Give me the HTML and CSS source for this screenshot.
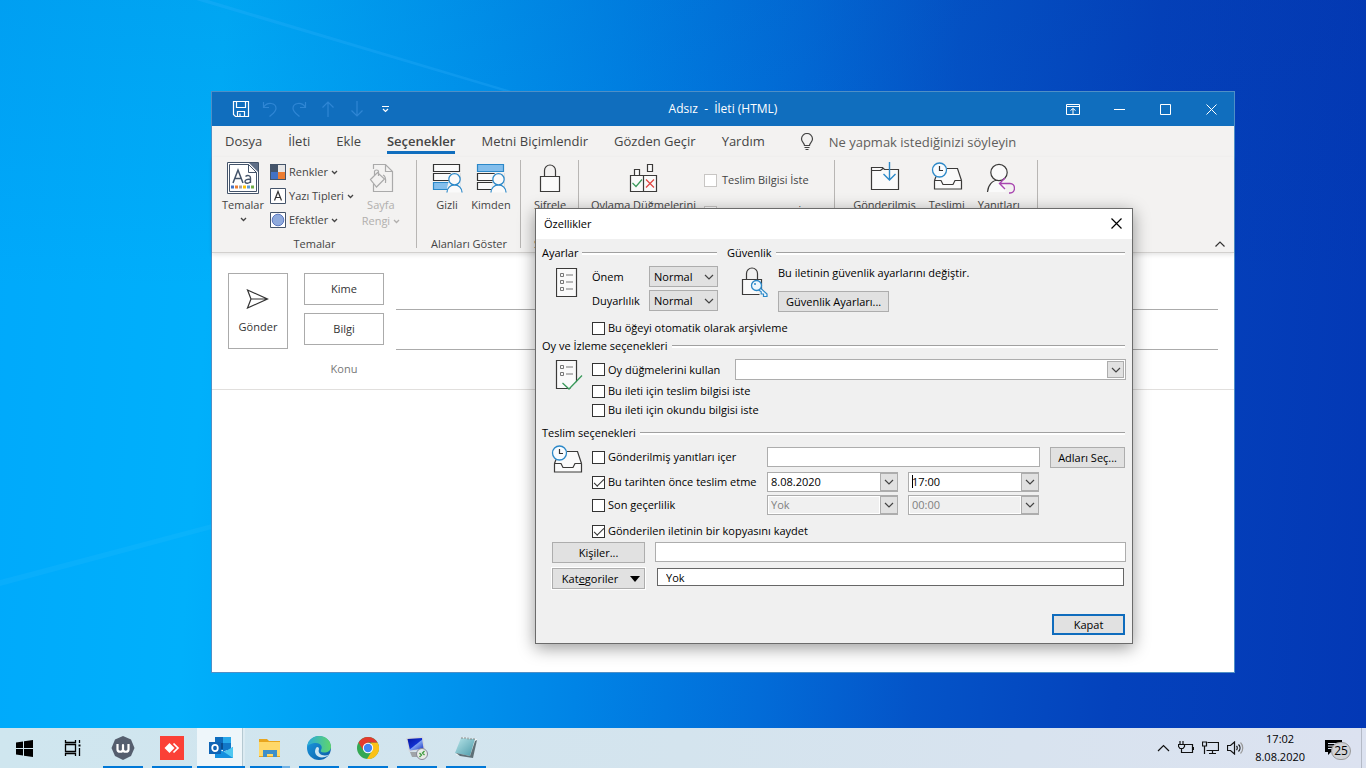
FILE: index.html
```html
<!DOCTYPE html>
<html lang="tr">
<head>
<meta charset="utf-8">
<title>Adsız - İleti (HTML)</title>
<link rel="stylesheet" href="styles.css">
</head>
<body>
<svg class="defs" aria-hidden="true">
  <defs>
    <linearGradient id="edgeA" x1="0" y1="0" x2="1" y2="1"><stop offset="0" stop-color="#1b9de2"/><stop offset="1" stop-color="#0c59a4"/></linearGradient>
    <linearGradient id="edgeB" x1="0" y1="0" x2="1" y2="0"><stop offset="0" stop-color="#2aa9dc"/><stop offset="1" stop-color="#5fd66b"/></linearGradient>
    <linearGradient id="pad" x1="0" y1="0" x2="1" y2="1"><stop offset="0" stop-color="#b9e6ea"/><stop offset="1" stop-color="#4a99a8"/></linearGradient>
    <linearGradient id="screen" x1="0" y1="0" x2="1" y2="1"><stop offset="0" stop-color="#0716a0"/><stop offset=".5" stop-color="#1230d0"/><stop offset=".55" stop-color="#7fa0f0"/><stop offset="1" stop-color="#1530c0"/></linearGradient>
    <symbol id="chev" viewBox="0 0 10 10"><path d="M1 3l4 4 4-4" fill="none" stroke="#444" stroke-width="1.2"/></symbol>
    <symbol id="chev-sm" viewBox="0 0 7 7"><path d="M1 2l2.500 2.500L6 2" fill="none" stroke="currentColor" stroke-width="1.300"/></symbol>
    <symbol id="tray" viewBox="0 0 32 30"><path d="M4 18L8 9l8-2.500h10L30 18v9H4z" fill="#fafafa"/><path d="M3.500 18.500l1.500-4M16 6.500h10.500l4 12M3.500 18.500V27h27v-8.500M3.500 18.500h6.500l2 4h10l2-4h6.500" fill="none" stroke="#3b3a39" stroke-width="1.200"/><circle cx="8.500" cy="8" r="7" fill="#f8fbfe" stroke="#2b88c8" stroke-width="1.300"/><path d="M8.500 4v4.500H12" fill="none" stroke="#333" stroke-width="1.200"/></symbol>
    <symbol id="lock" viewBox="0 0 22 30"><path d="M5.500 13V7.500a5.500 5.500 0 0 1 11 0V13" fill="none" stroke="#3b3a39" stroke-width="1.200"/><path d="M1.500 13.500h19v15h-19z" fill="#fafafa" stroke="#3b3a39" stroke-width="1.200"/></symbol>
    <symbol id="person" viewBox="0 0 18 22"><path d="M1 21a8 8 0 0 1 16 0z" fill="#fafafa"/><path d="M1 21a8 8 0 0 1 16 0" fill="none" stroke="#2b88c8" stroke-width="1.300"/><circle cx="9" cy="7" r="6" fill="#fafafa" stroke="#2b88c8" stroke-width="1.300"/></symbol>
  </defs>
</svg>

<main class="desktop">
  <svg class="rays" viewBox="0 0 1366 728" preserveAspectRatio="none" aria-hidden="true"><path d="M196 0L208 0 525 95 517 95z" fill="#3ab4ff" opacity=".22"/><path d="M0 580L212 524V529L0 586z" fill="#5bd0ff" opacity=".1"/></svg>

  <section class="mail" aria-label="İleti">
    <header class="titlebar">
      <div class="quick">
        <button aria-label="Kaydet"><svg width="18" height="18" viewBox="0 0 18 18" fill="none" stroke="#fff" stroke-width="1.200"><path d="M1.500 1.500h15v15h-13l-2-2zM4.500 1.500v6h9v-6M5.500 16.500v-5h7v5M8 16v-2.500"/></svg></button>
        <button disabled aria-label="Geri al"><svg width="18" height="18" viewBox="0 0 18 18"><path d="M2.500 2v5.500H8M2.500 7.500C6 1.500 15 2.500 15 8.500c0 3-3 5-6.500 8"/></svg></button>
        <button disabled aria-label="Yinele"><svg width="18" height="18" viewBox="0 0 18 18"><path d="M15.500 2v5.500H10M15.500 7.500C12 1.500 3 2.500 3 8.500c0 3 3 5 6.500 8"/></svg></button>
        <button disabled aria-label="Önceki"><svg width="18" height="18" viewBox="0 0 18 18"><path d="M9 17V2M3.500 7.500L9 2l5.500 5.500"/></svg></button>
        <button disabled aria-label="Sonraki"><svg width="18" height="18" viewBox="0 0 18 18"><path d="M9 1v15M3.500 10.500L9 16l5.500-5.500"/></svg></button>
        <button aria-label="Özelleştir"><svg width="9" height="8" viewBox="0 0 9 8" fill="none" stroke="#fff" stroke-width="1.200"><path d="M1 1.500h7M2 4l2.500 2.500L7 4"/></svg></button>
      </div>
      <h1>Adsız&nbsp; -&nbsp; İleti (HTML)</h1>
      <div class="controls">
        <button aria-label="Şerit"><svg width="14" height="11" viewBox="0 0 14 11"><path d="M.5.5h13v10H.5zM.5 2.500h13M7 10V4.500M4.500 6.500L7 4.500l2.500 2"/></svg></button>
        <button aria-label="Küçült"><svg width="11" height="11" viewBox="0 0 11 11"><path d="M0 5.500h11"/></svg></button>
        <button aria-label="Büyüt"><svg width="11" height="11" viewBox="0 0 11 11"><path d="M.5.5h10v10H.5z"/></svg></button>
        <button aria-label="Kapat"><svg width="11" height="11" viewBox="0 0 11 11"><path d="M.5.5l10 10M10.500.5l-10 10"/></svg></button>
      </div>
    </header>

    <nav class="tabs">
      <a href="#">Dosya</a><a href="#">İleti</a><a href="#">Ekle</a><a href="#" class="active">Seçenekler</a><a href="#">Metni Biçimlendir</a><a href="#">Gözden Geçir</a><a href="#">Yardım</a>
      <label class="tell"><svg width="14" height="18" viewBox="0 0 14 18" fill="none" stroke="#444" stroke-width="1.200"><path d="M4.500 12.500c0-2.500-3-3.500-3-6.500a5.500 5.500 0 0 1 11 0c0 3-3 4-3 6.500zM4.500 14.500h5M5.500 16.500h3"/></svg><input type="text" placeholder="Ne yapmak istediğinizi söyleyin" aria-label="Ne yapmak istediğinizi söyleyin"></label>
    </nav>

    <div class="ribbon">
      <section class="group themes">
        <div class="tools">
          <button class="big"><svg width="32" height="32" viewBox="0 0 32 32"><path d="M.5.5h31v31H.5z" fill="#fff" stroke="#44546a"/><path d="M2.500 2.500h19l8 8v19h-27z" fill="#fff" stroke="#44546a"/><path d="M22 1l9 9V1z" fill="#5f6f87"/><path d="M21.500 2.500v8h8z" fill="#fff" stroke="#44546a"/><path d="M6 21l5-13 5 13M7.800 16.500h6.500" fill="none" stroke="#44546a" stroke-width="1.500"/><path d="M18.500 14.500c2-1.800 5-1 5 1.500v5m0-3.500c-3-.5-5.500 0-5.500 2s4 2.500 5.500 0" fill="none" stroke="#44546a" stroke-width="1.400"/><path d="M4 23.500h3v3H4z" fill="#4472c4"/><path d="M8 23.500h3v3H8z" fill="#ed7d31"/><path d="M12 23.500h3v3h-3z" fill="#a5a5a5"/><path d="M16 23.500h3v3h-3z" fill="#ffc000"/><path d="M20 23.500h3v3h-3z" fill="#5b9bd5"/><path d="M24 23.500h3v3h-3z" fill="#70ad47"/></svg><span>Temalar</span><svg class="cs" width="7" height="7"><use href="#chev-sm"/></svg></button>
          <div class="stack">
            <button><svg width="16" height="16" viewBox="0 0 16 16"><path d="M0 0h16v16H0z" fill="#44546a"/><path d="M8 1h7v7H8z" fill="#e7e6e6"/><path d="M1 8h7v7H1z" fill="#4472c4"/><path d="M8 8h7v7H8z" fill="#ed7d31"/></svg><span>Renkler</span><svg class="cs" width="7" height="7"><use href="#chev-sm"/></svg></button>
            <button><svg width="16" height="16" viewBox="0 0 16 16"><path d="M.5.5h15v15H.5z" fill="#fff" stroke="#44546a"/><path d="M4.500 12.500l3.500-9 3.500 9M5.700 9.500h4.600" fill="none" stroke="#333" stroke-width="1.200"/></svg><span>Yazı Tipleri</span><svg class="cs" width="7" height="7"><use href="#chev-sm"/></svg></button>
            <button><svg width="16" height="16" viewBox="0 0 16 16"><path d="M.5.5h15v15H.5z" fill="#fff" stroke="#44546a"/><circle cx="8" cy="8" r="5.800" fill="#8faadc" stroke="#5b78c0"/></svg><span>Efektler</span><svg class="cs" width="7" height="7"><use href="#chev-sm"/></svg></button>
          </div>
          <button class="big" disabled><svg width="32" height="32" viewBox="0 0 32 32" fill="#f3f2f1" stroke="#aaa" stroke-width="1.200"><path d="M8.500 7V2.500h12l7 7v20h-19V22M20.500 2.500v7h7"/><path d="M9.500 13V9.500c0-2 4-2 4 0V14M5.500 17.500l7-7 7 6.500-8 8zM18 13c2.500 1 3 4 2.500 8"/></svg><span>Sayfa<br>Rengi <svg class="cs" width="7" height="7"><use href="#chev-sm"/></svg></span></button>
        </div>
        <h2>Temalar</h2>
      </section>
      <section class="group">
        <div class="tools">
          <button class="big"><svg width="32" height="32" viewBox="0 0 32 32"><path d="M2.500 2.500h26v7h-26zM2.500 11.500h26v7h-26z" fill="#fafafa" stroke="#333" stroke-width="1.200"/><path d="M2.500 20.500h26v7h-26z" fill="#83beec" stroke="#2b88c8" stroke-width="1.200"/><path d="M20 10h9v22H18l-2-6z" fill="#f3f2f1"/><use href="#person" x="15" y="10" width="17" height="22"/></svg><span>Gizli</span></button>
          <button class="big"><svg width="32" height="32" viewBox="0 0 32 32"><path d="M2.500 2.500h26v7h-26z" fill="#83beec" stroke="#2b88c8" stroke-width="1.200"/><path d="M2.500 11.500h26v7h-26zM2.500 20.500h26v7h-26z" fill="#fafafa" stroke="#333" stroke-width="1.200"/><path d="M20 10h9v22H18l-2-6z" fill="#f3f2f1"/><use href="#person" x="15" y="10" width="17" height="22"/></svg><span>Kimden</span></button>
        </div>
        <h2>Alanları Göster</h2>
      </section>
      <section class="group">
        <div class="tools"><button class="big"><svg width="32" height="32"><use href="#lock" x="5" y="1" width="22" height="30"/></svg><span>Şifrele</span></button></div>
        <h2>Şifrele</h2>
      </section>
      <section class="group voting">
        <div class="tools">
          <button class="big"><svg width="32" height="32" viewBox="0 0 32 32" fill="#fafafa" stroke="#3b3a39" stroke-width="1.200"><path d="M3.500 13.500h26v16h-26zM16.500 13.500v16M7.500 13.500v-6h5v6M20.500 2.500h5v7h-5z"/><path d="M5.500 21l3.500 3.500 6-7" fill="none" stroke="#3a9a5b"/><path d="M19 17.500l8 8m0-8l-8 8" stroke="#e0433f"/></svg><span>Oylama Düğmelerini</span></button>
          <div class="asks">
            <label class="check pale"><input type="checkbox"><span>Teslim Bilgisi İste</span></label>
            <label class="check pale"><input type="checkbox"><span>Okundu Bilgisi İste</span></label>
          </div>
        </div>
      </section>
      <section class="group more">
        <div class="tools">
          <button class="big"><svg width="32" height="32" viewBox="0 0 32 32" fill="#fafafa" stroke="#3b3a39" stroke-width="1.200"><path d="M2.500 5.500h11l2 2h14v20h-27zM2.500 8.500h9l2.500-2"/><path d="M20.500 0v18M14.500 12l6 6 6-6" fill="none" stroke="#2b88c8" stroke-width="1.400"/></svg><span>Gönderilmiş</span></button>
          <button class="big"><svg width="32" height="32"><use href="#tray" width="32" height="30"/></svg><span>Teslimi</span></button>
          <button class="big"><svg width="32" height="32" viewBox="0 0 32 32" fill="#fafafa" stroke="#3b3a39" stroke-width="1.200"><path d="M4.500 30c.5-7 5-12 11-12 3 0 5 1 7 3v9" stroke="none"/><path d="M4.500 30c.5-7 5-12 11-12"/><circle cx="16" cy="10.500" r="8.200"/><path d="M22 16l-5.500 5.500L22 27M16.500 21.500H27c6 0 6 9.500 0 9.500h-1" fill="none" stroke="#a846b0" stroke-width="1.400"/></svg><span>Yanıtları</span></button>
        </div>
      </section>
      <button class="collapse" aria-label="Şeridi daralt"><svg width="12" height="8" viewBox="0 0 12 8"><path d="M1.500 6.500L6 2l4.500 4.500" fill="none" stroke="#333" stroke-width="1.200"/></svg></button>
    </div>

    <form class="compose">
      <button type="button" class="send"><svg width="24" height="20" viewBox="0 0 24 20"><path d="M1.500 1l20 9-20 9 3.500-9zM5 10h16" fill="none" stroke="#333" stroke-width="1.200"/></svg><span>Gönder</span></button>
      <div class="fields">
        <div class="field"><button type="button">Kime</button><input type="text" aria-label="Kime"></div>
        <div class="field"><button type="button">Bilgi</button><input type="text" aria-label="Bilgi"></div>
        <div class="field subject"><label for="subject">Konu</label><input type="text" id="subject"></div>
      </div>
    </form>
  </section>

  <section class="dialog" role="dialog" aria-labelledby="dlg-title">
    <header><h2 id="dlg-title">Özellikler</h2><button aria-label="Kapat"><svg width="11" height="11" viewBox="0 0 11 11"><path d="M.5.5l10 10M10.500.5l-10 10" stroke="#000" stroke-width="1.200"/></svg></button></header>
    <form class="dbody">
      <div class="top">
        <section>
          <h3>Ayarlar</h3>
          <div class="settings">
            <svg width="22" height="29" viewBox="0 0 22 29"><path d="M.5.5h20v28H.5z" fill="#fafafa" stroke="#3b3a39" stroke-width="1.200"/><path d="M4.500 5.500h3v3h-3zM4.500 12.500h3v3h-3zM4.500 19.500h3v3h-3zM10 7h7M10 14h7M10 21h7" fill="none" stroke="#777"/></svg>
            <div class="pairs">
              <label for="imp">Önem</label><span class="drop"><select id="imp"><option>Normal</option></select><svg width="10" height="10"><use href="#chev"/></svg></span>
              <label for="sens">Duyarlılık</label><span class="drop"><select id="sens"><option>Normal</option></select><svg width="10" height="10"><use href="#chev"/></svg></span>
            </div>
          </div>
        </section>
        <section>
          <h3>Güvenlik</h3>
          <div class="security">
            <svg width="28" height="32" viewBox="0 0 28 32"><use href="#lock" x="0" width="22" height="30"/><path d="M19 22l8 8v2h-5v-3h-3l-4-4z" fill="#f0f0f0"/><path d="M18.800 21.500l7.200 6.500v2.500h-3.500V28h-2.300v-2.300l-3.500-2.500" fill="#eef7fd" stroke="#2b88c8" stroke-width="1.200"/><circle cx="15.500" cy="19.500" r="5" fill="#eef7fd" stroke="#2b88c8" stroke-width="1.300"/><circle cx="14" cy="18" r="1" fill="#2b88c8"/></svg>
            <div><p>Bu iletinin güvenlik ayarlarını değiştir.</p><button type="button" class="btn">Güvenlik Ayarları...</button></div>
          </div>
        </section>
      </div>
      <label class="check archive"><input type="checkbox"><span>Bu öğeyi otomatik olarak arşivleme</span></label>

      <h3>Oy ve İzleme seçenekleri</h3>
      <div class="block votes">
        <svg width="32" height="32" viewBox="0 0 32 32"><path d="M5.500 1.500h20v28h-20z" fill="#fafafa" stroke="#3b3a39" stroke-width="1.200"/><path d="M18 31l14-15v16H15z" fill="#f0f0f0"/><path d="M9.500 6.500h3v3h-3zM9.500 13.500h3v3h-3zM15 8h7M15 15h7" fill="none" stroke="#777"/><path d="M11.500 24l6.500 6L31 16.500" fill="none" stroke="#3a9a5b" stroke-width="1.300"/></svg>
        <div class="lines">
          <div class="vote"><label class="check"><input type="checkbox"><span>Oy düğmelerini kullan</span></label><div class="combo wide"><input type="text" aria-label="Oy düğmeleri"><button type="button" aria-label="Aç"><svg width="10" height="10"><use href="#chev"/></svg></button></div></div>
          <label class="check"><input type="checkbox"><span>Bu ileti için teslim bilgisi iste</span></label>
          <label class="check"><input type="checkbox"><span>Bu ileti için okundu bilgisi iste</span></label>
        </div>
      </div>

      <h3>Teslim seçenekleri</h3>
      <div class="block delivery">
        <svg width="32" height="30"><use href="#tray"/></svg>
        <div class="dgrid">
          <label class="check"><input type="checkbox"><span>Gönderilmiş yanıtları içer</span></label>
          <div class="names"><input class="txt" type="text" aria-label="Yanıt adresi"><button type="button" class="btn">Adları Seç...</button></div>
          <label class="check"><input type="checkbox" checked><span>Bu tarihten önce teslim etme</span></label>
          <div class="when"><div class="combo"><input type="text" value="8.08.2020" aria-label="Tarih"><button type="button" aria-label="Aç"><svg width="10" height="10"><use href="#chev"/></svg></button></div><div class="combo caret"><input type="text" value="17:00" aria-label="Saat"><button type="button" aria-label="Aç"><svg width="10" height="10"><use href="#chev"/></svg></button></div></div>
          <label class="check"><input type="checkbox"><span>Son geçerlilik</span></label>
          <div class="when"><div class="combo off"><input type="text" value="Yok" disabled aria-label="Son tarih"><button type="button" aria-label="Aç"><svg width="10" height="10"><use href="#chev"/></svg></button></div><div class="combo off"><input type="text" value="00:00" disabled aria-label="Son saat"><button type="button" aria-label="Aç"><svg width="10" height="10"><use href="#chev"/></svg></button></div></div>
          <label class="check copy"><input type="checkbox" checked><span>Gönderilen iletinin bir kopyasını kaydet</span></label>
        </div>
      </div>
      <div class="link-row"><button type="button" class="btn">Kişiler...</button><input class="txt" type="text" aria-label="Kişiler"></div>
      <div class="link-row cat"><button type="button" class="btn"><span>Kat<u>e</u>goriler</span><svg width="10" height="6" viewBox="0 0 10 6"><path d="M0 0h10L5 6z"/></svg></button><input class="txt" type="text" value="Yok" aria-label="Kategoriler"></div>
      <div class="foot"><button type="button" class="btn primary">Kapat</button></div>
    </form>
  </section>
</main>

<footer class="taskbar">
  <button aria-label="Başlat"><svg width="17" height="17" viewBox="0 0 17 17"><path d="M0 2.500L7 1.500V8H0zM8 1.300L17 0v8H8zM0 9h7v6.500L0 14.500zM8 9h9v8l-9-1.300z"/></svg></button>
  <button aria-label="Görev görünümü"><svg width="17" height="16" viewBox="0 0 17 16" fill="none" stroke="#000" stroke-width="1.300"><path d="M1.500 4.500h10v7h-10zM1.500 0v2.500h10V0M1.500 16v-2.500h10V16M15.500 0v3M15.500 8v8"/><path d="M14.500 4.500h2v2h-2z" fill="#000" stroke="none"/></svg></button>
  <div class="apps">
    <button class="app" aria-label="WhatsApp"><svg width="24" height="24" viewBox="0 0 24 24"><path d="M12 0l8 3.500L23.500 12 20 20l-8 4-8-4L.5 12 4 3.500z" fill="#555e6e"/><path d="M6.500 8v5.500c0 3 5.500 3 5.500 0V9v4.500c0 3 5.500 3 5.500 0V8" fill="none" stroke="#fff" stroke-width="2.200" stroke-linejoin="round"/></svg></button>
    <button class="app" aria-label="AnyDesk"><svg width="24" height="24" viewBox="0 0 24 24"><path d="M0 0h24v24H0z" fill="#fb4036"/><path d="M9.500 7L14.500 12l-5 5-5-5z" fill="#fff"/><path d="M13.500 7.500L18 12l-4.500 4.500" fill="none" stroke="#fff" stroke-width="1.700"/></svg></button>
    <button class="app current" aria-label="Outlook"><svg width="24" height="24" viewBox="0 0 24 24"><path d="M6 1h16v13H6z" fill="#0f6cbd"/><path d="M14 1h8v6h-8z" fill="#28a8ea"/><path d="M6 7h8v6H6z" fill="#0a4d8f"/><path d="M14 7h8v5l-8 4z" fill="#1177c8"/><path d="M6 11l9 5 9-5v11H6z" fill="#1490df"/><path d="M24 11v11l-9-6z" fill="#50c8f0"/><path d="M0 6h12v12H0z" fill="#0f64b5"/><ellipse cx="6" cy="12" rx="2.800" ry="3.200" fill="none" stroke="#fff" stroke-width="1.800"/></svg></button>
    <button class="app multi" aria-label="Dosya Gezgini"><svg width="24" height="20" viewBox="0 0 24 20"><path d="M1 1h8l2 2h11v16H1z" fill="#e8a51e"/><path d="M1 4h21v14H1z" fill="#ffd869"/><path d="M5 19v-7h14v7h-4v-3H9v3z" fill="#3e8fc8"/></svg></button>
    <button class="app" aria-label="Edge"><svg width="24" height="24" viewBox="0 0 24 24"><circle cx="12" cy="12" r="12" fill="url(#edgeA)"/><path d="M0 11C1 4 6 0 12 0c7 0 12 5 12 10.500 0 4-3 6-7 6-3 0-4-1-3-2.500 2-3 0-7-5-7-4 0-8 2-9 4z" fill="url(#edgeB)"/><path d="M9 12c-3 5 1 11 9 9 2-.5 3-1.500 4-2.500-5 2.500-12 0-10-5.500 0-2-2-3-3-1z" fill="#c9e4f2"/></svg></button>
    <button class="app" aria-label="Chrome"><svg width="22" height="22" viewBox="0 0 22 22"><circle cx="11" cy="11" r="11" fill="#34a853"/><path d="M20.500 5.500A11 11 0 0 1 10 22l5.500-9L14 5.500z" fill="#fbc116"/><path d="M1.500 5.500A11 11 0 0 1 20.500 5.500H11L6 13z" fill="#e33b2e"/><circle cx="11" cy="11" r="5.200" fill="#fff"/><circle cx="11" cy="11" r="4.200" fill="#4285f4"/></svg></button>
    <button class="app" aria-label="Uzak masaüstü"><svg width="24" height="24" viewBox="0 0 24 24"><path d="M5 16h8l3 5H7z" fill="#a0a4a8"/><path d="M1 2l17-1.500 2 13L4 16z" fill="#d5d8dc"/><path d="M2.500 3l14.500-1 1.500 10.500L5 14.500z" fill="url(#screen)"/><circle cx="17" cy="18" r="5.500" fill="#e8ece6" stroke="#889"/><path d="M14.500 17l2 2-2 2M19.500 15l-2 2 2 2" fill="none" stroke="#3c9b3c" stroke-width="1.300"/></svg></button>
    <button class="app" aria-label="Not Defteri"><svg width="24" height="24" viewBox="0 0 24 24"><path d="M8 1l15 2-4 18L2 19z" fill="#f1f5f6"/><path d="M7 2l14 1-5 17-15-3z" fill="url(#pad)"/><path d="M2 17l14 3 5-15 2-1-4 18-13-2z" fill="#5e7077"/><path d="M8 1v2M11 1v2M14 1.500v2M17 2v2M20 2v2" stroke="#888"/></svg></button>
  </div>
  <div class="systray">
    <button aria-label="Gizli simgeler"><svg width="13" height="8" viewBox="0 0 13 8"><path d="M1 7l5.500-5.500L12 7"/></svg></button>
    <button aria-label="Pil"><svg width="16" height="14" viewBox="0 0 16 14"><path d="M6 3.500h8.500v8H5M15.500 6v3M2 0v3M5 0v3M.5 3.500h6v2l-1.500 2H2L.5 5.500zM3.500 8v3.500H6"/></svg></button>
    <button aria-label="Ağ"><svg width="17" height="14" viewBox="0 0 17 14"><path d="M5.500 1.500h11v8h-12M10.500 9.500v3M7 12.500h7M.5 1h4v4h-4zM2.500 5v8"/></svg></button>
    <button aria-label="Ses"><svg width="17" height="14" viewBox="0 0 17 14"><path d="M.5 4.500h3L7.500 1v12l-4-3.500h-3z"/><path d="M9.500 5c1 1 1 3 0 4M11.500 3.500c2 2 2 5 0 7"/><path d="M13.500 1.500c3 3 3 8 0 11" stroke="#999"/></svg></button>
    <time>17:02<br>8.08.2020</time>
    <button class="notify" aria-label="Bildirimler"><svg width="18" height="16" viewBox="0 0 18 16"><path d="M0 0h17v12H6l-3 3v-3H0z" fill="#000" stroke="none"/><path d="M3 3.500h11M3 6h11M3 8.500h8" stroke="#dde3f0" stroke-width="1"/></svg><span>25</span></button>
  </div>
</footer>
</body>
</html>
```
FILE: styles.css
```css
* { box-sizing: border-box; }
body {
  margin: 0;
  height: 100vh;
  display: flex;
  flex-direction: column;
  overflow: hidden;
  font: 12px/16px "Open Sans", "Noto Sans", sans-serif;
  color: #444;
}
h1, h2, h3, p { margin: 0; font: inherit; }
button, input, select { font: inherit; color: inherit; margin: 0; padding: 0; border: 0; background: none; border-radius: 0; outline: 0; }
button { display: flex; align-items: center; justify-content: center; white-space: nowrap; }
input { min-width: 0; }
svg { flex: none; display: block; }
.defs { position: absolute; width: 0; height: 0; }

.desktop {
  position: relative;
  flex: 1;
  background:
    linear-gradient(180deg, rgba(0, 40, 130, .08), rgba(0, 40, 130, 0) 40%),
    linear-gradient(94deg, #00a9fb 0%, #00b0fb 16%, #009cf2 30%, #0084e6 44%, #026cd8 57%, #0454c8 68%, #0442bc 82%, #0338b5 100%);
}
.rays { position: absolute; inset: 0; width: 100%; height: 100%; }

/* Message window */
.mail {
  position: absolute;
  inset: 91px 131px 55px 211px;
  display: flex;
  flex-direction: column;
  background: #fff;
  border: 1px solid #4f8fc6;
}
.titlebar {
  display: grid;
  grid-template-columns: 1fr auto 1fr;
  align-items: center;
  height: 34px;
  background: #106ebe;
  color: #fff;
}
.quick { display: flex; padding-left: 14px; }
.quick button { width: 29px; height: 34px; }
.quick button:disabled svg { fill: none; stroke: #2f86d4; stroke-width: 1.2; }
.controls { display: flex; justify-content: flex-end; }
.controls button { width: 46px; height: 34px; }
.controls svg { fill: none; stroke: #fff; stroke-width: 1; }

.tabs { display: flex; height: 31px; padding-bottom: 3px; background: #f3f2f1; font-size: 13px; line-height: 20px; }
.tabs a { margin: 5px 13px 0; color: inherit; text-decoration: none; border-bottom: 3px solid transparent; white-space: nowrap; }
.tabs .active { font-weight: 600; border-color: #106ebe; }
.tell { display: flex; flex: 1; align-items: center; gap: 15px; margin-left: 22px; padding-top: 3px; }
.tell input { flex: 1; }
.tell input::placeholder { color: #605e5c; opacity: 1; }

.ribbon {
  display: grid;
  grid-template-columns: 205px 104px 58px 256px 203px 1fr;
  height: 96px;
  padding-top: 3px;
  background: #f3f2f1;
  border-bottom: 1px solid #d2d0ce;
  box-shadow: 0 2px 4px rgba(0, 0, 0, .1);
  font-size: 11px;
}
.group { position: relative; display: flex; flex-direction: column; }
.group::after { content: ""; position: absolute; right: 0; top: 0; height: 88px; border-right: 1px solid #b8b6b4; }
.tools { display: flex; flex: 1; justify-content: center; gap: 2px; padding-top: 2px; }
.themes .tools { justify-content: flex-start; gap: 6px; padding-left: 10px; }
.voting .tools { justify-content: flex-start; gap: 8px; padding-left: 12px; }
.more .tools { gap: 10px; }
.group h2 { height: 16px; text-align: center; }
.big { flex-direction: column; justify-content: flex-start; align-self: flex-start; min-width: 42px; gap: 3px; }
.big:disabled { color: #b1afad; }
.big .cs { display: inline-block; }
.stack { display: flex; flex-direction: column; margin-top: -2px; }
.stack button { height: 24px; gap: 3px; justify-content: flex-start; }
.asks { display: flex; flex-direction: column; gap: 16px; padding-top: 10px; }
.collapse { align-self: end; justify-self: end; width: 28px; height: 16px; }

.compose { display: flex; gap: 16px; padding: 20px 16px 4px; border-bottom: 1px solid #e1dfdd; font-size: 11px; }
.compose button { border: 1px solid #ababab; color: #333; background: #fff; }
.send { flex-direction: column; gap: 10px; width: 60px; height: 76px; padding-top: 2px; }
.fields { flex: 1; display: flex; flex-direction: column; gap: 3px; }
.field { display: flex; gap: 12px; height: 37px; }
.field button, .field label { width: 80px; height: 32px; text-align: center; }
.field label { line-height: 32px; color: #777; }
.field input { flex: 1; border-bottom: 1px solid #ababab; }
.subject { height: 32px; }
.subject input { border: 0; }

/* Properties dialog */
.dialog {
  position: absolute;
  inset: 208px 233px auto 535px;
  background: #f0f0f0;
  border: 1px solid #6b6b6b;
  box-shadow: 0 4px 16px rgba(0, 0, 0, .4);
  color: #000;
  font-size: 11px;
  line-height: 14px;
}
.dialog header { display: flex; justify-content: space-between; align-items: center; height: 30px; padding-left: 8px; background: #fff; }
.dialog header button { width: 31px; height: 28px; align-self: flex-start; }
.dbody { padding: 7px 7px 8px 6px; }
.dialog h3 { display: flex; gap: 4px; height: 14px; white-space: nowrap; }
.dialog h3::after { content: ""; flex: 1; height: 2px; margin-top: 6px; border-top: 1px solid #a0a0a0; background: #fff; }
.top { display: grid; grid-template-columns: 175px 1fr; gap: 10px; }
.settings { display: flex; gap: 14px; padding: 8px 0 0 14px; }
.pairs { display: grid; flex: 1; grid-template-columns: 1fr 69px; row-gap: 3px; margin: -2px -1px 0 0; align-items: center; }
.drop { position: relative; }
.drop select { display: block; appearance: none; width: 100%; height: 21px; padding-left: 4px; border: 1px solid #adadad; background: #e1e1e1; }
.drop svg { position: absolute; right: 4px; top: 6px; pointer-events: none; }
.security { display: flex; gap: 9px; padding: 6px 0 0 14px; }
.security p { margin: 0 0 11px; }
.btn { height: 21px; padding: 0 7px; border: 1px solid #adadad; background: #e1e1e1; }
.check { display: flex; align-items: center; gap: 3px; white-space: nowrap; }
.check input { appearance: none; display: grid; flex: none; width: 13px; height: 13px; border: 1px solid #333; background: #fff; }
.check input:checked::before { content: ""; width: 9px; height: 4px; margin: 2px 0 0 1px; border: solid #333; border-width: 0 0 1px 1px; transform: rotate(-45deg); }
.pale { gap: 5px; }
.pale input { border-color: #c8c6c4; }
.archive { margin: 9px 0 4px 50px; }
.block { display: grid; grid-template-columns: 32px 1fr; gap: 9px; padding-left: 9px; }
.votes { padding-top: 6px; }
.lines { display: flex; flex-direction: column; gap: 5px; }
.vote { display: flex; justify-content: space-between; height: 21px; align-items: center; }
.lines .vote { margin-bottom: -1px; }
.combo { display: flex; height: 20px; background: #fff; border: 1px solid #adadad; }
.combo input { flex: 1; padding-left: 3px; }
.combo button { width: 18px; margin: 0 -1px 0 0; border: 1px solid #adadad; background: #e1e1e1; }
.wide { width: 391px; height: 21px; margin-right: -1px; }
.wide button { margin: 1px; width: 17px; }
.off input { margin: 1px; padding-left: 2px; background: #f0f0f0; color: #808080; }
.caret { position: relative; }
.caret::before { content: ""; position: absolute; left: 3px; top: 2px; height: 13px; border-left: 1px solid #000; }
.votes + h3 { margin-top: 9px; }
.delivery { padding-top: 5px; }
.dgrid { display: grid; grid-template-columns: 166px 1fr; column-gap: 9px; grid-template-rows: 22px 20px 20px 19px; row-gap: 3px; padding-top: 2px; }
.dgrid .check { height: 20px; }
.names { display: flex; gap: 10px; }
.txt { flex: 1; height: 20px; background: #fff; border: 1px solid #adadad; }
.when { display: grid; grid-template-columns: 131px 131px; gap: 10px; }
.copy { grid-column: span 2; margin-top: 3px; }
.link-row { display: flex; gap: 10px; margin: 5px -1px 0 10px; }
.link-row .btn { width: 93px; }
.cat .btn { gap: 12px; padding: 0 4px 0 9px; outline: 1px solid #fff; }
.cat { margin-right: 1px; gap: 12px; }
.cat .txt { flex: 1; height: 18px; padding-left: 8px; border-color: #666; }
.foot { display: flex; justify-content: flex-end; margin-top: 25px; }
.primary { width: 73px; border: 2px solid #0f6cbd; }

/* Taskbar */
.taskbar {
  display: flex;
  height: 40px;
  flex: none;
  background: linear-gradient(90deg, #cfe6ef, #d4e4ee 50%, #dce2f0);
  color: #000;
  font-size: 11px;
}
.taskbar > button { width: 48px; }
.apps { display: flex; gap: 1px; margin-left: 3px; }
.app { position: relative; width: 48px; }
.app::after { content: ""; position: absolute; bottom: 0; left: 4px; right: 4px; height: 2px; background: #0078d7; }
.current { background: linear-gradient(90deg, #eef6fa 45px, #b5c9d2 45px, #b5c9d2 46px, #dcebf2 46px); }
.current::after { left: 0; right: 0; }
.multi::after { background: linear-gradient(90deg, #0078d7 32px, #6fb2e6 32px); }
.systray { display: flex; align-items: center; gap: 8px; margin-left: auto; padding-right: 4px; margin-right: 4px; border-right: 1px solid #b4bac6; }
.systray svg { fill: none; stroke: #111; stroke-width: 1.2; }
.systray time { margin: 0 12px 0 3px; line-height: 18px; text-align: center; }
.notify { position: relative; width: 32px; justify-content: flex-start; }
.notify span { position: absolute; left: 6px; top: 2px; width: 20px; height: 18px; border: 1px solid #999; border-radius: 9px; background: #d0d2d6; font-size: 12px; line-height: 16px; text-align: center; }
```
